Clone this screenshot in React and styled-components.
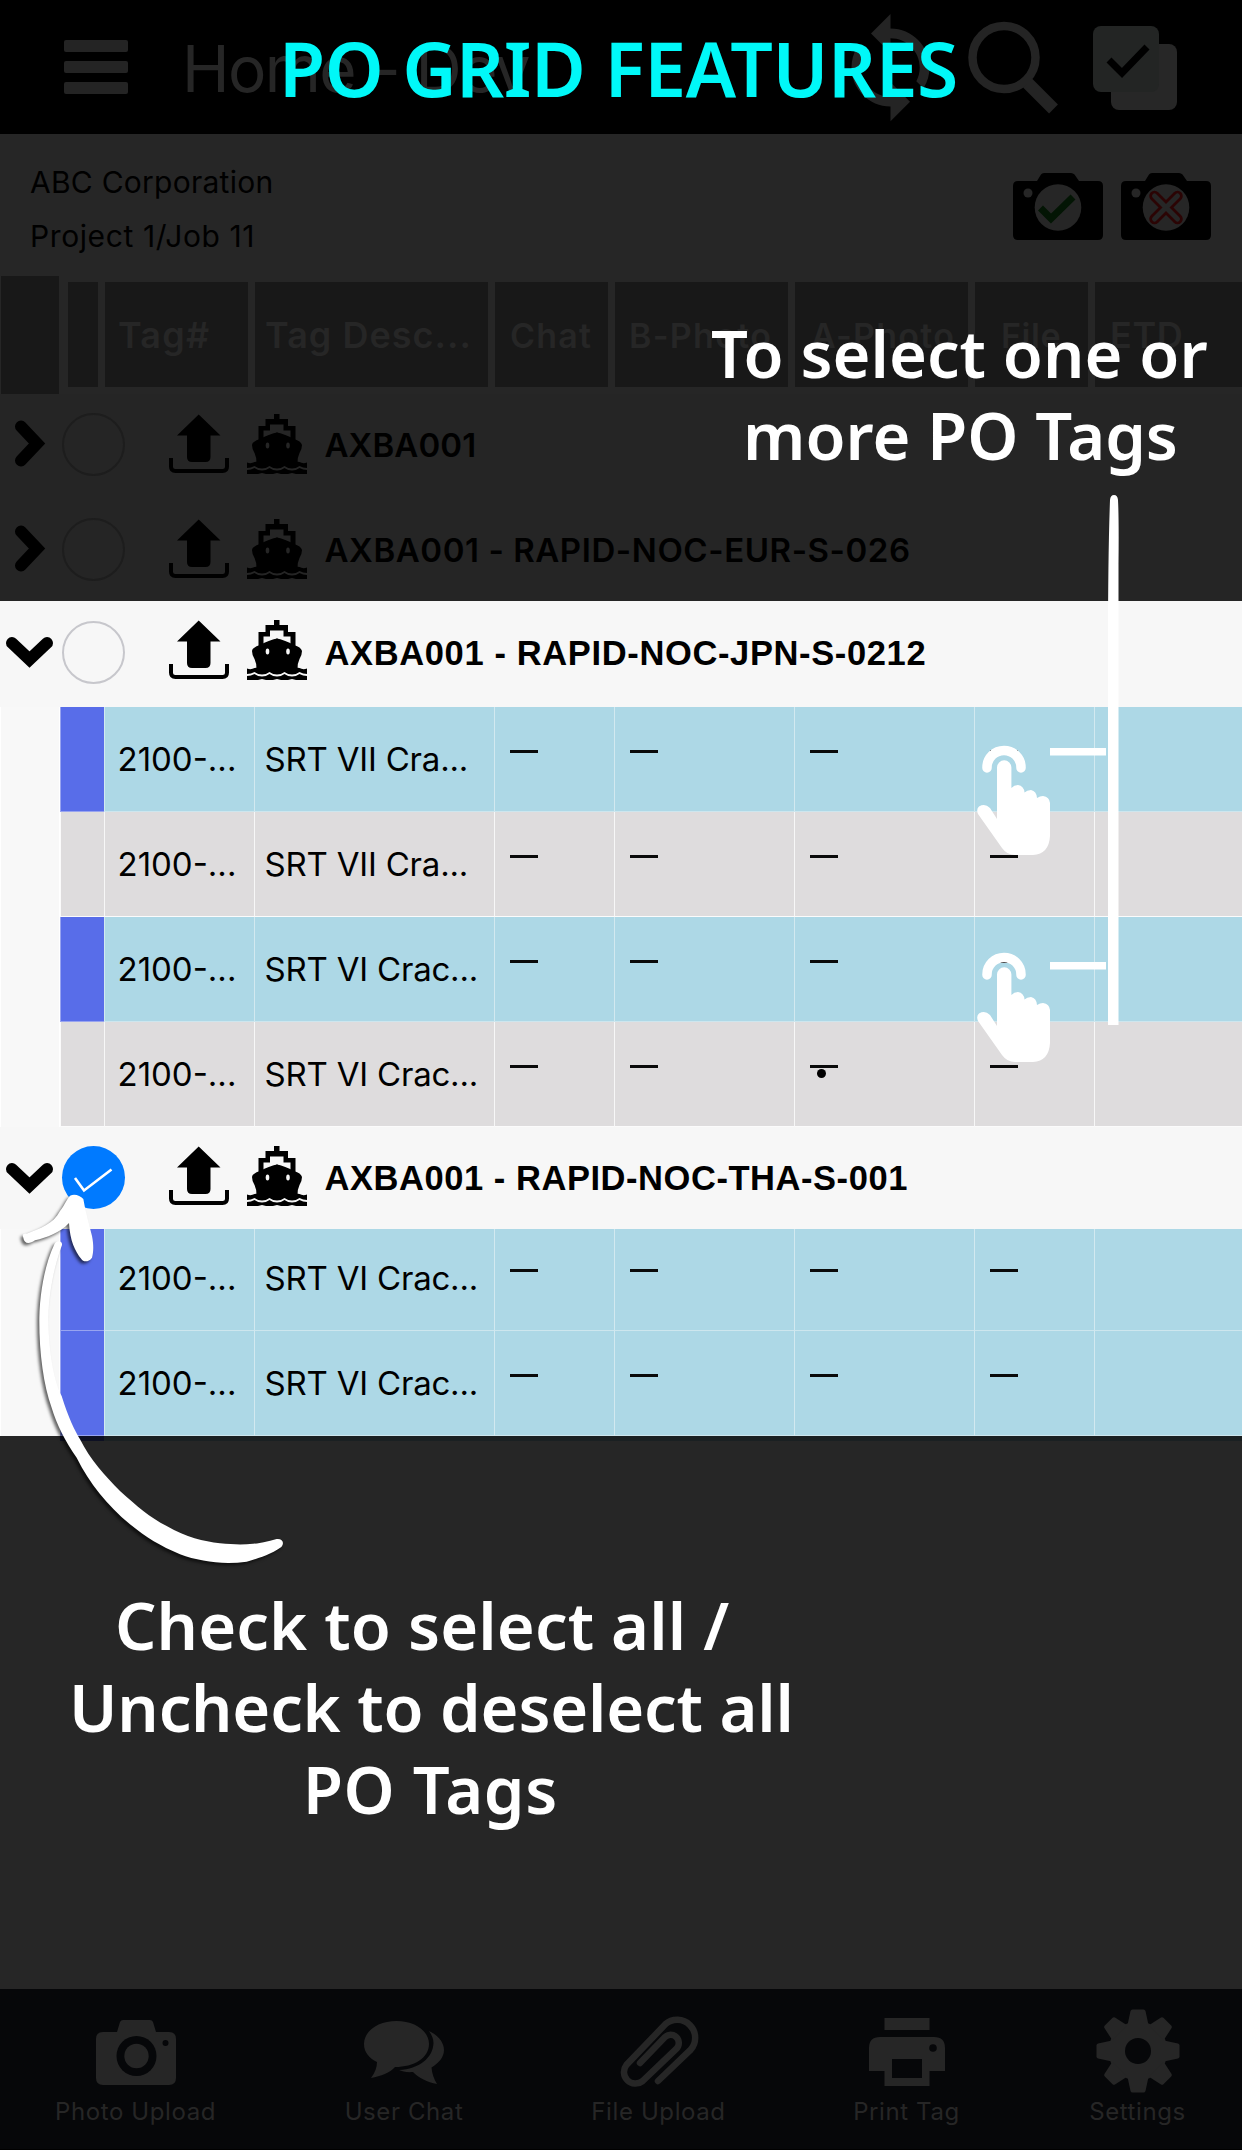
import React from "react";
import styled, { createGlobalStyle } from "styled-components";
import { MdSync } from "react-icons/md";

const Global = createGlobalStyle`
  html, body { margin: 0; padding: 0; background: #262626; }
  * { box-sizing: border-box; }
  svg { display: block; flex: none; }
`;

const sans = `Inter, "Liberation Sans", sans-serif`;
const callout = `"Noto Sans", "Open Sans", sans-serif`;

const Screen = styled.main`
  position: relative;
  display: flex;
  flex-direction: column;
  width: 1242px;
  height: 2150px;
  overflow: hidden;
  background: #262626;
  font-family: ${sans};
  color: #000;
  white-space: nowrap;
`;

const TopBar = styled.header`
  display: flex;
  align-items: flex-start;
  height: 134px;
  padding-left: 64px;
  background: #000;
  color: #262626;
`;

const Burger = styled.div`
  display: flex;
  flex-direction: column;
  gap: 9px;
  width: 64px;
  margin-top: 40px;
`;
const BurgerBar = styled.span`
  height: 12px;
  border-radius: 2px;
  background: #242424;
`;

const PageTitle = styled.div`
  width: 501px;
  margin-left: 54px;
  padding-top: 29px;
  font-size: 64px;
  line-height: 80px;
  letter-spacing: -1.6px;
`;

const BarIcons = styled.div`
  display: flex;
  align-items: flex-start;
  padding-left: 149px;
`;
const SyncIcon = styled(MdSync)`
  margin: 9px 18px 0 0;
  color: #242424;
`;

const ProjectBar = styled.section`
  display: flex;
  justify-content: space-between;
  height: 142px;
  padding: 21px 31px 0 30px;
`;
const ProjectLine = styled.div`
  font-size: 30px;
  line-height: 54px;
  letter-spacing: ${(p) => p.$ls}px;
`;
const CameraPair = styled.div`
  display: flex;
  gap: 18px;
  padding-top: 18px;
`;

const HeadRow = styled.div`
  display: flex;
  align-items: flex-start;
  height: 118px;
`;
const HeadCorner = styled.div`
  flex: none;
  width: 58px;
  height: 118px;
  margin: 0 9px 0 1px;
  background: #181818;
`;
const HeadCell = styled.div`
  flex: none;
  width: ${(p) => p.$w}px;
  height: 105px;
  margin: 6px 7px 0 0;
  padding-left: ${(p) => p.$pad || 0}px;
  background: #181818;
  color: #262626;
  font-size: ${(p) => p.$size || 36}px;
  font-weight: 600;
  line-height: 107px;
  letter-spacing: ${(p) => p.$ls || 0}px;
`;

const GroupRow = styled.div`
  display: flex;
  align-items: center;
  height: ${(p) => p.$h}px;
  padding-top: ${(p) => p.$top || 0}px;
  padding-bottom: ${(p) => p.$bottom || 0}px;
  background: ${(p) => (p.$lit ? "#f7f7f7" : "#252525")};
`;
const ChevronSlot = styled.div`
  display: flex;
  justify-content: center;
  width: 60px;
`;
const Radio = styled.div`
  display: grid;
  place-items: center;
  flex: none;
  width: 63px;
  height: 63px;
  margin-left: 2px;
  border-radius: 50%;
  border: ${(p) => (p.$on ? "none" : `2px solid ${p.$lit ? "#c7c7cc" : "#1d1d1d"}`)};
  background: ${(p) => (p.$on ? "#007aff" : "transparent")};
`;
const GroupIcons = styled.div`
  display: flex;
  align-items: flex-end;
  gap: 18px;
  margin: 0 17.5px 0 44px;
  padding-bottom: ${(p) => p.$lift || 0}px;
`;
const GroupName = styled.div`
  font-family: ${(p) => (p.$lit ? `"Liberation Sans", Arial, sans-serif` : sans)};
  font-size: ${(p) => (p.$lit ? 34.5 : 33)}px;
  font-weight: ${(p) => (p.$lit ? 700 : 600)};
  line-height: 40px;
  letter-spacing: ${(p) => p.$ls || 0}px;
  padding-top: 1px;
`;

const DataRow = styled.div`
  display: flex;
  height: ${(p) => p.$h}px;
`;
const Gutter = styled.div`
  flex: none;
  width: 60px;
  background: #f8f8f8;
  border-left: 1px solid #fff;
  border-right: 1px solid #fff;
`;
const Cell = styled.div`
  flex: none;
  width: ${(p) => p.$w}px;
  border-left: 1px solid ${(p) => (p.$on ? "#d2e9f0" : "#f7f7f7")};
  border-bottom: 1px solid ${(p) => (p.$on ? "#cde6ee" : "#fbfbfb")};
  background: ${(p) => (p.$on ? "#add8e6" : "#dedcdd")};
  padding-left: ${(p) => p.$pad || 0}px;
  padding-top: ${(p) => p.$top || 0}px;
  font-size: 33px;
  line-height: 40px;
  letter-spacing: ${(p) => p.$ls || 0}px;
`;
const Marker = styled(Cell)`
  border-color: ${(p) => (p.$on ? "#98a4f0" : "#fbfbfb")};
  background: ${(p) => (p.$on ? "#586de9" : "#dedcdd")};
`;
const Dash = styled.div`
  width: 28px;
  height: 3px;
  background: #0a0a0a;
`;
const Dot = styled.div`
  width: 9px;
  height: 9px;
  margin: 1px 0 0 7px;
  border-radius: 50%;
  background: #000;
`;
const ShadeStrip = styled.div`
  height: 5px;
  margin-left: 60px;
  background: linear-gradient(90deg, #0d1023 0 44px, #1a2022 44px);
`;
const Spacer = styled.div`
  flex: 1;
`;

const Footer = styled.footer`
  display: flex;
  justify-content: center;
  gap: 131px;
  height: 161px;
  padding-top: 19px;
  background: #060709;
  border-bottom: 1px solid #000;
  color: #262626;
`;
const FooterItem = styled.div`
  display: flex;
  flex-direction: column;
  align-items: center;
  width: ${(p) => p.$w}px;
  font-size: 24px;
  line-height: 30px;
  letter-spacing: 0.6px;
`;
const FooterLabel = styled.div`
  margin-top: 3px;
`;

const Overlay = styled.div`
  position: absolute;
  left: ${(p) => p.$x}px;
  top: ${(p) => p.$y}px;
`;
const Headline = styled(Overlay)`
  font-family: ${callout};
  font-weight: 600;
  font-size: 75px;
  line-height: 100px;
  letter-spacing: ${(p) => p.$ls}px;
  color: #00f8f8;
`;
const Note = styled(Overlay)`
  font-family: ${callout};
  font-weight: 600;
  font-size: 65px;
  line-height: 82px;
  color: #fff;
`;
const NoteLine = styled.div`
  padding-left: ${(p) => p.$in || 0}px;
  letter-spacing: ${(p) => p.$ls || 0}px;
`;

const Chevron = ({ down }) =>
  down ? (
    <svg width="60" height="32" viewBox="0 0 60 32">
      <path d="M12 7L29.5 23.5L47 7" fill="none" stroke="#000" strokeWidth="12" strokeLinecap="round" />
    </svg>
  ) : (
    <svg width="60" height="50" viewBox="0 0 60 50">
      <path d="M21 7.500L37 24.500L21 41.500" fill="none" stroke="#000" strokeWidth="12" strokeLinecap="round" />
    </svg>
  );

const Upload = () => (
  <svg width="60" height="60" viewBox="0 0 60 60">
    <path d="M29.700 0.500L51.500 21.500H41.500V43Q41.500 48 36.500 48H23Q18 48 18 43V21.500H8Z" />
    <path d="M2 44V52.500Q2 57 6.500 57H53.500Q58 57 58 52.500V44" fill="none" stroke="#000" strokeWidth="4" />
  </svg>
);

const Ship = ({ back }) => (
  <svg width="60" height="60" viewBox="0 0 60 60">
    <path d="M27 0H32.500V5H41V12H48.500V27H11.500V12H18.500V5H27Z" />
    <path d="M23 10.500H36.500V16.500H43.500V24L30 18.500L16.500 24V16.500H23Z" fill={back} />
    <path d="M30 18.500Q38 20 47 25Q54 27 55 31Q55 35 52.500 39Q50.500 43 50.500 49H9.500Q9.500 43 7.500 39Q5 35 5 31Q6 27 13 25Q22 20 30 18.500Z" />
    <ellipse cx="20.500" cy="31.500" rx="1.800" ry="3" fill={back} />
    <ellipse cx="41" cy="31.500" rx="1.800" ry="3" fill={back} />
    <path d="M0 48.500Q4 50 7.500 48Q18 46 22.500 48H37.500Q42 46 52.500 48Q56 50 60 48.500V54Q56 54 52.500 52Q49 54.500 45 54.500Q41 54.500 37.500 52Q34 54.500 30 54.500Q26 54.500 22.500 52Q19 54.500 15 54.500Q11 54.500 7.500 52Q4 54 0 54Z" />
    <path d="M0 56Q4 56 7.500 54Q11 56.500 15 56.500Q19 56.500 22.500 54Q26 56.500 30 56.500Q34 56.500 37.500 54Q41 56.500 45 56.500Q49 56.500 52.500 54Q56 56 60 56V60H49L45 59L41 60H34L30 59L26 60H19L15 59L11 60H0Z" />
  </svg>
);

const SearchIcon = () => (
  <svg width="92" height="134" viewBox="0 0 92 134" fill="none" stroke="#242424">
    <circle cx="37" cy="57.500" r="31.500" strokeWidth="8.500" />
    <path d="M60.500 83L86.500 109" strokeWidth="12.500" />
  </svg>
);

const CopyCheckSvg = styled.svg`
  margin-left: 33px;
`;
const CopyCheck = () => (
  <CopyCheckSvg width="86" height="134" viewBox="0 0 86 134">
    <rect x="19" y="44" width="66" height="66" rx="8" fill="#272727" />
    <rect x="1" y="26" width="66" height="66" rx="8" fill="#232524" />
    <path d="M17 60L30 73L55 47" fill="none" stroke="#000" strokeWidth="7" />
  </CopyCheckSvg>
);

const StatusCamera = ({ ok }) => (
  <svg width="90" height="68" viewBox="0 0 90 68">
    <path d="M5 8H24L28 1.500Q29 0 31 0H58Q60 0 61.500 1.500L66 8H85Q90 8 90 13V62Q90 67 85 67H5Q0 67 0 62V13Q0 8 5 8Z" />
    <circle cx="15" cy="20" r="4.500" fill="#262626" />
    <circle cx="45" cy="34.500" r="23.300" fill="#262626" />
    {ok ? (
      <path d="M27.500 35L38 45.500L60 24" fill="none" stroke="#031504" strokeWidth="7" />
    ) : (
      <>
        <path d="M33.500 23L56.500 46M56.500 23L33.500 46" stroke="#2b0404" strokeWidth="10.500" strokeLinecap="round" />
        <path d="M33.500 23L56.500 46M56.500 23L33.500 46" stroke="#262626" strokeWidth="5" strokeLinecap="round" />
      </>
    )}
  </svg>
);

const FootCamera = () => (
  <svg width="84" height="86" viewBox="0 0 84 86" fill="#262626">
    <path d="M9 24H23L26 14Q27 12 29 12H56Q58 12 59 14L62 24H75Q82 24 82 31V70Q82 77 75 77H9Q2 77 2 70V31Q2 24 9 24Z" />
    <circle cx="42.500" cy="48" r="20" fill="#060709" />
    <circle cx="42.500" cy="48" r="12.200" />
    <circle cx="71.500" cy="35" r="3" fill="#060709" />
  </svg>
);
const FootChat = () => (
  <svg width="84" height="86" viewBox="363 2008 84 86" fill="#262626">
    <path d="M397.500 2021C416 2021 430 2031 430 2044C430 2058 415 2067 396 2067C391 2073 382 2076 372 2078C376 2073 378 2067 378 2062C370 2058 365 2052 365 2044C365 2031 379 2021 397.500 2021Z" />
    <path d="M430 2031C441 2036 445 2044 445 2050C445 2057 440 2063 432.500 2067.500C433 2074 435 2079 438 2084C428 2082 420 2078 414 2072C408 2072.500 403 2071.500 400 2070C420 2069 434 2058 434.500 2043C434.500 2038 432 2034 430 2031Z" />
  </svg>
);
const FootClip = () => (
  <svg width="84" height="86" viewBox="618 2008 84 86" fill="none" stroke="#262626" strokeWidth="6.500" strokeLinecap="round">
    <path d="M659 2081L691.700 2049.700A18 18 0 0 0 666.300 2024.300L627.400 2065A11.500 11.500 0 0 0 643.600 2081.100L677.500 2048.700A8 8 0 0 0 665.800 2037.300L641 2063" />
  </svg>
);
const FootPrinter = () => (
  <svg width="84" height="86" viewBox="865 2008 84 86" fill="#262626">
    <path d="M884.500 2018H929.500V2030H884.500Z" />
    <path fillRule="evenodd" d="M880 2037H934Q945 2037 945 2048V2071H929.500V2086H884.500V2071H869V2048Q869 2037 880 2037ZM892 2059V2078H922V2059Z" />
    <circle cx="933" cy="2048" r="3.800" fill="#060709" />
  </svg>
);
const FootGear = () => (
  <svg width="84" height="86" viewBox="-42 -43 84 86" fill="#262626">
    <circle r="29.500" />
    {[0, 45, 90, 135, 180, 225, 270, 315].map((a) => (
      <path key={a} transform={`rotate(${a})`} d="M-10.500 -26L-7.500 -40Q-7 -41.500 -5.500 -41.500H5.500Q7 -41.500 7.500 -40L10.500 -26Z" />
    ))}
    <circle r="13" fill="#060709" />
  </svg>
);

const Tap = () => (
  <svg width="76" height="112" viewBox="0 0 76 112" fill="#fff">
    <path d="M11 22V21.500A17 17 0 0 1 45 21.500V22" transform="translate(0 1)" fill="none" stroke="#fff" strokeWidth="9.500" strokeLinecap="round" />
    <path d="M21 22.500A7.200 7.200 0 0 1 35.400 22.500V43Q38 40 42 40Q48 41 48.500 47.500Q51 45 55 45Q60.500 46 61 53Q64 51 67 51Q73.500 52 74 58V91Q73 109 57 110H39Q31 110 26 103L2 69Q0 64 3 61.500Q9 58 14 63L21 74Z" />
  </svg>
);

const CurvedArrow = () => (
  <svg width="300" height="390" viewBox="0 0 900 1170" fill="#fff">
    <g filter="drop-shadow(-7px 7px 5px rgba(0,0,0,.6))">
      <path d="M163 160C168 146 188 148 186 162C166 215 146 300 145 380C145 470 160 570 185 615C205 680 225 720 240 745C270 805 315 855 360 900C410 945 450 980 500 1005C560 1040 610 1050 660 1057C730 1064 780 1060 830 1044C848 1042 854 1056 844 1068C810 1092 780 1100 740 1112C670 1122 600 1112 540 1090C480 1065 440 1040 390 1000C320 940 270 880 230 800C195 750 170 700 155 650C130 580 117 480 118 380C120 300 135 220 163 160Z" />
      <path d="M70 140C66 132 70 127 80 128C120 112 160 100 180 60C195 40 200 25 210 14C225 8 240 14 250 24C256 60 266 95 276 135C282 165 280 185 276 200C266 214 250 214 244 204C225 180 210 150 207 96C180 125 140 140 105 148C85 162 72 156 70 140Z" />
    </g>
  </svg>
);

const columns = [
  { key: "chat", w: 120 },
  { key: "before", w: 180 },
  { key: "after", w: 180 },
  { key: "file", w: 120 },
];

function TagRow({ on, desc, h, top = 0, dot }) {
  return (
    <DataRow $h={h}>
      <Gutter />
      <Marker $w={44} $on={on} />
      <Cell $w={150} $on={on} $pad={12.5} $top={32 + top}>2100-...</Cell>
      <Cell $w={240} $on={on} $pad={9.5} $top={32 + top} $ls={-0.2}>{desc}</Cell>
      {columns.map((c) => (
        <Cell key={c.key} $w={c.w} $on={on} $pad={15} $top={43 + top}>
          <Dash />
          {dot && c.key === "after" && <Dot />}
        </Cell>
      ))}
      <Cell $w={148} $on={on} />
    </DataRow>
  );
}

function Group({ name, h, top, bottom, lit, open, on, lift, ls }) {
  const back = lit ? "#f7f7f7" : "#252525";
  return (
    <GroupRow $h={h} $top={top} $bottom={bottom} $lit={lit}>
      <ChevronSlot><Chevron down={open} /></ChevronSlot>
      <Radio $on={on} $lit={lit}>
        {on && (
          <svg width="63" height="63" viewBox="0 0 63 63">
            <path d="M13 32L22 44.500L49.500 23.500" fill="none" stroke="#fff" strokeWidth="2.600" />
          </svg>
        )}
      </Radio>
      <GroupIcons $lift={lift}>
        <Upload />
        <Ship back={back} />
      </GroupIcons>
      <GroupName $lit={lit} $ls={ls}>{name}</GroupName>
    </GroupRow>
  );
}

export default function App() {
  return (
    <>
      <Global />
      <Screen>
        <TopBar>
          <Burger>
            <BurgerBar />
            <BurgerBar />
            <BurgerBar />
          </Burger>
          <PageTitle>Home - Dev</PageTitle>
          <BarIcons>
            <SyncIcon size={117} />
            <SearchIcon />
            <CopyCheck />
          </BarIcons>
        </TopBar>
        <ProjectBar>
          <div>
            <ProjectLine $ls={0.25}>ABC Corporation</ProjectLine>
            <ProjectLine $ls={0.6}>Project 1/Job 11</ProjectLine>
          </div>
          <CameraPair>
            <StatusCamera ok />
            <StatusCamera />
          </CameraPair>
        </ProjectBar>
        <HeadRow>
          <HeadCorner />
          <HeadCell $w={30} />
          <HeadCell $w={143} $pad={13} $ls={1.2}>Tag#</HeadCell>
          <HeadCell $w={233} $pad={10} $ls={1}>Tag Desc...</HeadCell>
          <HeadCell $w={113} $pad={15} $size={34} $ls={1.2}>Chat</HeadCell>
          <HeadCell $w={173} $pad={14} $size={34} $ls={1.3}>B-Photo</HeadCell>
          <HeadCell $w={173} $pad={16} $size={34} $ls={1.3}>A-Photo</HeadCell>
          <HeadCell $w={113} $pad={26} $size={34} $ls={0.6}>File</HeadCell>
          <HeadCell $w={155} $pad={15} $ls={0.6}>ETD</HeadCell>
        </HeadRow>

        <Group name="AXBA001" h={100} ls={0.1} />
        <Group name="AXBA001 - RAPID-NOC-EUR-S-026" h={107} top={3} ls={0.57} />
        <Group name="AXBA001 - RAPID-NOC-JPN-S-0212" h={106} bottom={4} lit open lift={4} ls={0.63} />
        <TagRow on desc="SRT VII Cra..." h={105} />
        <TagRow desc="SRT VII Cra..." h={105} />
        <TagRow on desc="SRT VI Crac..." h={105} />
        <TagRow desc="SRT VI Crac..." h={105} dot />
        <Group name="AXBA001 - RAPID-NOC-THA-S-001" h={102} bottom={1} lit open on lift={3} ls={0.55} />
        <TagRow on desc="SRT VI Crac..." h={102} top={-3} />
        <TagRow on desc="SRT VI Crac..." h={105} />
        <ShadeStrip />
        <Spacer />

        <Footer>
          <FooterItem $w={158}><FootCamera /><FooterLabel>Photo Upload</FooterLabel></FooterItem>
          <FooterItem $w={117}><FootChat /><FooterLabel>User Chat</FooterLabel></FooterItem>
          <FooterItem $w={130}><FootClip /><FooterLabel>File Upload</FooterLabel></FooterItem>
          <FooterItem $w={104}><FootPrinter /><FooterLabel>Print Tag</FooterLabel></FooterItem>
          <FooterItem $w={96}><FootGear /><FooterLabel>Settings</FooterLabel></FooterItem>
        </Footer>

        <Headline $x={279} $y={18} $ls={-0.5}>PO GRID FEATURES</Headline>
        <Note $x={711} $y={312}>
          <NoteLine>To select one or</NoteLine>
          <NoteLine $in={32}>more PO Tags</NoteLine>
        </Note>
        <Overlay $x={1049} $y={494}>
          <svg width="72" height="532" viewBox="0 0 72 532" fill="#fff">
            <path d="M61 6Q61.500 1 65 1Q68.500 1 69 6Q70 25 69.500 70V531H59V150Q59 60 61 6Z" />
            <path d="M1 254H57V261.500H1ZM1 468H57V475.500H1Z" />
          </svg>
        </Overlay>
        <Overlay $x={976} $y={745}><Tap /></Overlay>
        <Overlay $x={976} $y={952}><Tap /></Overlay>
        <Overlay $x={0} $y={1191}><CurvedArrow /></Overlay>
        <Note $x={69} $y={1584}>
          <NoteLine $in={46} $ls={0.1}>Check to select all /</NoteLine>
          <NoteLine $ls={-0.2}>Uncheck to deselect all</NoteLine>
          <NoteLine $in={234} $ls={0.6}>PO Tags</NoteLine>
        </Note>
      </Screen>
    </>
  );
}
